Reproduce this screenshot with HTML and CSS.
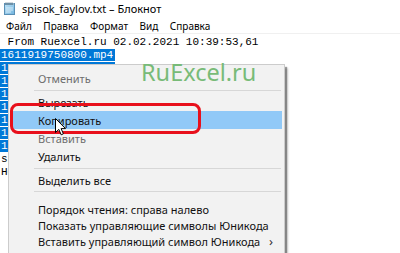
FILE: index.html
```html
<!DOCTYPE html>
<html lang="ru">
<head>
<meta charset="utf-8">
<title>Блокнот</title>
<link rel="stylesheet" href="styles.css">
</head>
<body>
<div class="window">
  <div class="titlebar">
    <svg class="app-icon" width="11" height="13" viewBox="0 0 11 13">
      <defs>
        <linearGradient id="pg" x1="0" y1="0" x2="1" y2="1">
          <stop offset="0" stop-color="#bfe3f7"/>
          <stop offset="1" stop-color="#6fb3de"/>
        </linearGradient>
      </defs>
      <rect x="0.5" y="1.5" width="10" height="11" fill="url(#pg)" stroke="#5a8fb5" stroke-width="1"/>
      <rect x="1" y="1" width="9" height="2" fill="#8fb6cf"/>
      <path d="M2 0.5v2.5M4 0.5v2.5M6 0.5v2.5M8 0.5v2.5" stroke="#4a6a80" stroke-width="1"/>
      <path d="M2 6h7M2 8h7M2 10h5" stroke="#e8f4fb" stroke-width="0.8"/>
    </svg>
    <span class="title">spisok_faylov.txt – Блокнот</span>
  </div>
  <div class="menubar">
    <span class="mb-item">Файл</span>
    <span class="mb-item">Правка</span>
    <span class="mb-item">Формат</span>
    <span class="mb-item">Вид</span>
    <span class="mb-item">Справка</span>
  </div>
  <div class="editor">
    <div class="line"> From Ruexcel.ru 02.02.2021 10:39:53,61</div>
    <div class="line"><span class="sel">1611919750800.mp4</span></div>
    <div class="line"><span class="sel">1611919750801.mp4</span></div>
    <div class="line"><span class="sel">1611919750802.mp4</span></div>
    <div class="line"><span class="sel">1611919750803.mp4</span></div>
    <div class="line"><span class="sel">1611919750804.mp4</span></div>
    <div class="line"><span class="sel">1611919750805.mp4</span></div>
    <div class="line"><span class="sel">1611919750806.mp4</span></div>
    <div class="line"><span class="sel">1611919750807.mp4</span></div>
    <div class="line">spisok_faylov.txt</div>
    <div class="line">Hello</div>
  </div>

  <div class="ctx">
    <div class="ctx-item disabled">Отменить</div>
    <div class="ctx-sep"></div>
    <div class="ctx-item">Вырезать</div>
    <div class="ctx-item active">Копировать</div>
    <div class="ctx-item disabled">Вставить</div>
    <div class="ctx-item">Удалить</div>
    <div class="ctx-sep"></div>
    <div class="ctx-item">Выделить все</div>
    <div class="ctx-sep wide"></div>
    <div class="ctx-item short">Порядок чтения: справа налево</div>
    <div class="ctx-item short">Показать управляющие символы Юникода</div>
    <div class="ctx-item short has-sub">Вставить управляющий символ Юникода<span class="sub-arrow">›</span></div>
  </div>

  <div class="watermark">RuExcel.ru</div>
  <div class="callout"></div>
  <svg class="cursor" width="12" height="18" viewBox="0 0 12 18">
    <path d="M0.5 0.5 L0.5 14.5 L3.8 11.4 L6.2 16.8 L8.4 15.8 L6.1 10.6 L10.5 10.6 Z" fill="#fff" stroke="#000" stroke-width="1" stroke-linejoin="miter"/>
  </svg>
</div>
</body>
</html>
```

FILE: styles.css
```css
* { box-sizing: border-box; }
html, body { margin: 0; padding: 0; }
body {
  width: 400px;
  height: 253px;
  overflow: hidden;
  background: #fff;
  font-family: "Noto Sans", "DejaVu Sans", sans-serif;
}
.window {
  position: relative;
  width: 400px;
  height: 253px;
  overflow: hidden;
  background: #fff;
}
.titlebar {
  display: flex;
  align-items: center;
  height: 18px;
  padding-left: 4px;
  gap: 7px;
}
.app-icon { flex: none; margin-top: -2px; }
.title {
  font-size: 11px;
  color: #000;
  line-height: 14px;
}
.menubar {
  display: flex;
  height: 16px;
  align-items: center;
  padding-left: 6px;
  gap: 11.5px;
  font-size: 10px;
  color: #000;
  border-bottom: 1px solid #f0f0f0;
  margin-bottom: 1px;
}
.editor {
  padding-top: 1px;
  font-family: "Liberation Mono", "DejaVu Sans Mono", monospace;
  font-size: 11px;
  line-height: 13px;
  color: #000;
}
.line {
  white-space: pre;
  height: 13px;
  padding-left: 1px;
}
.sel {
  background: #0078d7;
  color: #fff;
  padding-right: 2px;
  margin-left: -1px;
  padding-left: 1px;
}
.ctx {
  position: absolute;
  left: 8px;
  top: 64px;
  width: 277px;
  height: 200px;
  background: #f2f2f2;
  border: 1px solid #cccccc;
  padding: 4px 2px 2px;
  box-shadow: 2px 3px 1px rgba(0,0,0,0.35), 3px 4px 2px rgba(0,0,0,0.2);
  font-size: 11px;
  color: #111;
}
.ctx-item {
  display: flex;
  align-items: center;
  height: 18px;
  padding-left: 27px;
  padding-right: 9px;
  white-space: nowrap;
}
.ctx-item.short { height: 16px; }
.ctx-item.disabled { color: #6d6d6d; }
.ctx-item.active { background: #91c9f7; }
.ctx-item.has-sub { justify-content: space-between; }
.sub-arrow {
  font-size: 13px;
  color: #333;
}
.ctx-sep {
  margin: 3px 1px 0 23px;
  border-top: 1px solid #d7d7d7;
  height: 3px;
}
.ctx-sep.wide {
  margin-top: 2px;
  height: 10px;
}
.watermark {
  position: absolute;
  left: 141px;
  top: 57px;
  font-family: "Noto Sans", "Open Sans", sans-serif;
  font-size: 23.5px;
  line-height: 30px;
  color: #78bb78;
  z-index: 5;
}
.callout {
  position: absolute;
  left: 10px;
  top: 103px;
  width: 191px;
  height: 31px;
  border: 3px solid #e8101c;
  border-radius: 8px;
  z-index: 6;
}
.cursor {
  position: absolute;
  left: 55px;
  top: 118px;
  z-index: 7;
}
```
